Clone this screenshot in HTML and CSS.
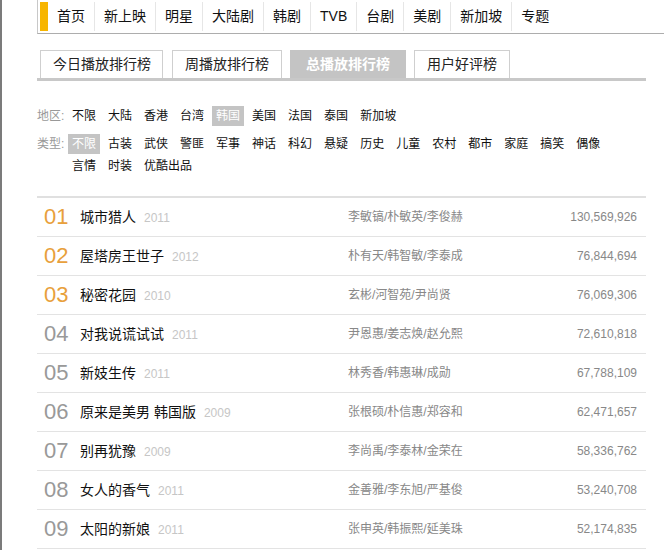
FILE: index.html
```html
<!DOCTYPE html>
<html lang="zh-CN">
<head>
<meta charset="utf-8">
<title>总播放排行榜</title>
<link rel="stylesheet" href="styles.css">
</head>
<body>
<div class="page">
  <div class="nav">
    <span class="nav-mark"></span>
    <a class="nav-item">首页</a>
    <a class="nav-item">新上映</a>
    <a class="nav-item">明星</a>
    <a class="nav-item">大陆剧</a>
    <a class="nav-item">韩剧</a>
    <a class="nav-item">TVB</a>
    <a class="nav-item">台剧</a>
    <a class="nav-item">美剧</a>
    <a class="nav-item">新加坡</a>
    <a class="nav-item nav-last">专题</a>
  </div>

  <div class="tabs">
    <a class="tab tab-first">今日播放排行榜</a>
    <a class="tab">周播放排行榜</a>
    <a class="tab tab-active">总播放排行榜</a>
    <a class="tab">用户好评榜</a>
  </div>

  <div class="filters">
    <div class="filter">
      <span class="filter-label">地区:</span>
      <div class="filter-items">
        <a class="fi">不限</a><a class="fi">大陆</a><a class="fi">香港</a><a class="fi">台湾</a><a class="fi fi-on">韩国</a><a class="fi">美国</a><a class="fi">法国</a><a class="fi">泰国</a><a class="fi">新加坡</a>
      </div>
    </div>
    <div class="filter">
      <span class="filter-label">类型:</span>
      <div class="filter-items">
        <a class="fi fi-on">不限</a><a class="fi">古装</a><a class="fi">武侠</a><a class="fi">警匪</a><a class="fi">军事</a><a class="fi">神话</a><a class="fi">科幻</a><a class="fi">悬疑</a><a class="fi">历史</a><a class="fi">儿童</a><a class="fi">农村</a><a class="fi">都市</a><a class="fi">家庭</a><a class="fi">搞笑</a><a class="fi">偶像</a><a class="fi">言情</a><a class="fi">时装</a><a class="fi">优酷出品</a>
      </div>
    </div>
  </div>

  <ul class="rank">
    <li class="rank-row rank-top"><span class="rank-num">01</span><span class="rank-title">城市猎人<span class="rank-year">2011</span></span><span class="rank-actors">李敏镐/朴敏英/李俊赫</span><span class="rank-count">130,569,926</span></li>
    <li class="rank-row rank-top"><span class="rank-num">02</span><span class="rank-title">屋塔房王世子<span class="rank-year">2012</span></span><span class="rank-actors">朴有天/韩智敏/李泰成</span><span class="rank-count">76,844,694</span></li>
    <li class="rank-row rank-top"><span class="rank-num">03</span><span class="rank-title">秘密花园<span class="rank-year">2010</span></span><span class="rank-actors">玄彬/河智苑/尹尚贤</span><span class="rank-count">76,069,306</span></li>
    <li class="rank-row"><span class="rank-num">04</span><span class="rank-title">对我说谎试试<span class="rank-year">2011</span></span><span class="rank-actors">尹恩惠/姜志焕/赵允熙</span><span class="rank-count">72,610,818</span></li>
    <li class="rank-row"><span class="rank-num">05</span><span class="rank-title">新妓生传<span class="rank-year">2011</span></span><span class="rank-actors">林秀香/韩惠琳/成勋</span><span class="rank-count">67,788,109</span></li>
    <li class="rank-row"><span class="rank-num">06</span><span class="rank-title">原来是美男 韩国版<span class="rank-year">2009</span></span><span class="rank-actors">张根硕/朴信惠/郑容和</span><span class="rank-count">62,471,657</span></li>
    <li class="rank-row"><span class="rank-num">07</span><span class="rank-title">别再犹豫<span class="rank-year">2009</span></span><span class="rank-actors">李尚禹/李泰林/金荣在</span><span class="rank-count">58,336,762</span></li>
    <li class="rank-row"><span class="rank-num">08</span><span class="rank-title">女人的香气<span class="rank-year">2011</span></span><span class="rank-actors">金善雅/李东旭/严基俊</span><span class="rank-count">53,240,708</span></li>
    <li class="rank-row"><span class="rank-num">09</span><span class="rank-title">太阳的新娘<span class="rank-year">2011</span></span><span class="rank-actors">张申英/韩振熙/延美珠</span><span class="rank-count">52,174,835</span></li>
  </ul>
</div>
</body>
</html>
```

FILE: styles.css
```css
* { box-sizing: border-box; }

html, body {
  margin: 0;
  padding: 0;
  background: #fff;
}

body {
  font-family: "Liberation Sans", "Noto Sans CJK SC", sans-serif;
  font-size: 12px;
  color: #000;
}

.page {
  border-left: 2px solid #7b7b7b;
  min-height: 550px;
  padding: 0 18px 0 35px;
  overflow: hidden;
}

/* top navigation */
.nav {
  display: flex;
  align-items: flex-start;
  height: 34px;
  margin-right: -18px;
  padding: 2px 0;
  border-left: 1px solid #c8c8c8;
  border-bottom: 1px solid #adadad;
}

.nav-mark {
  width: 8px;
  height: 29px;
  margin-left: 2px;
  background: #f7b500;
}

.nav-item {
  display: block;
  height: 29px;
  line-height: 29px;
  padding: 0 9px;
  font-size: 14px;
  color: #111;
  border-right: 1px solid #e6e6e6;
  white-space: nowrap;
}

.nav-last { border-right: none; }

/* tabs */
.tabs {
  display: flex;
  margin-top: 16px;
  border-bottom: 3px solid #c8c8c8;
  padding-left: 3px;
}

.tab {
  display: block;
  height: 28px;
  line-height: 27px;
  padding: 0 12px;
  margin-right: 8px;
  font-size: 14px;
  color: #222;
  border: 1px solid #cfcfcf;
  border-bottom: none;
  white-space: nowrap;
}

.tab-first { padding: 0 11px 0 12px; margin-right: 9px; }

.tab-active {
  background: #c4c4c4;
  border-color: #c4c4c4;
  color: #fff;
  font-weight: bold;
  padding: 0 15px;
}

/* filters */
.filters {
  margin-top: 25px;
  display: flex;
  flex-direction: column;
  gap: 8px;
}

.filter {
  display: flex;
  align-items: flex-start;
}

.filter-label {
  width: 31px;
  line-height: 20px;
  color: #999;
  white-space: nowrap;
}

.filter-items {
  display: flex;
  flex-wrap: wrap;
  width: 560px;
  row-gap: 2px;
  column-gap: 4px;
}

.fi {
  display: block;
  height: 20px;
  line-height: 20px;
  padding: 0 4px;
  color: #111;
  white-space: nowrap;
}

.fi-on {
  background: #c4c4c4;
  color: #fff;
}

/* ranking list */
.rank {
  list-style: none;
  margin: 20px 0 0;
  padding: 0;
  border-top: 2px solid #e0e0e0;
}

.rank-row {
  display: grid;
  grid-template-columns: 36px 268px 1fr auto;
  align-items: center;
  height: 39px;
  padding: 0 9px 0 7px;
  border-bottom: 1px solid #e3e3e3;
}

.rank-num {
  font-size: 22px;
  line-height: 24px;
  color: #999;
}

.rank-top .rank-num { color: #e8a03c; }

.rank-title {
  font-size: 14px;
  line-height: 20px;
  color: #111;
  white-space: nowrap;
}

.rank-year {
  margin-left: 8px;
  font-size: 12px;
  color: #c6c6c6;
}

.rank-actors {
  font-size: 12px;
  line-height: 20px;
  color: #888;
  white-space: nowrap;
}

.rank-count {
  font-size: 12px;
  line-height: 20px;
  color: #888;
  text-align: right;
}
```
